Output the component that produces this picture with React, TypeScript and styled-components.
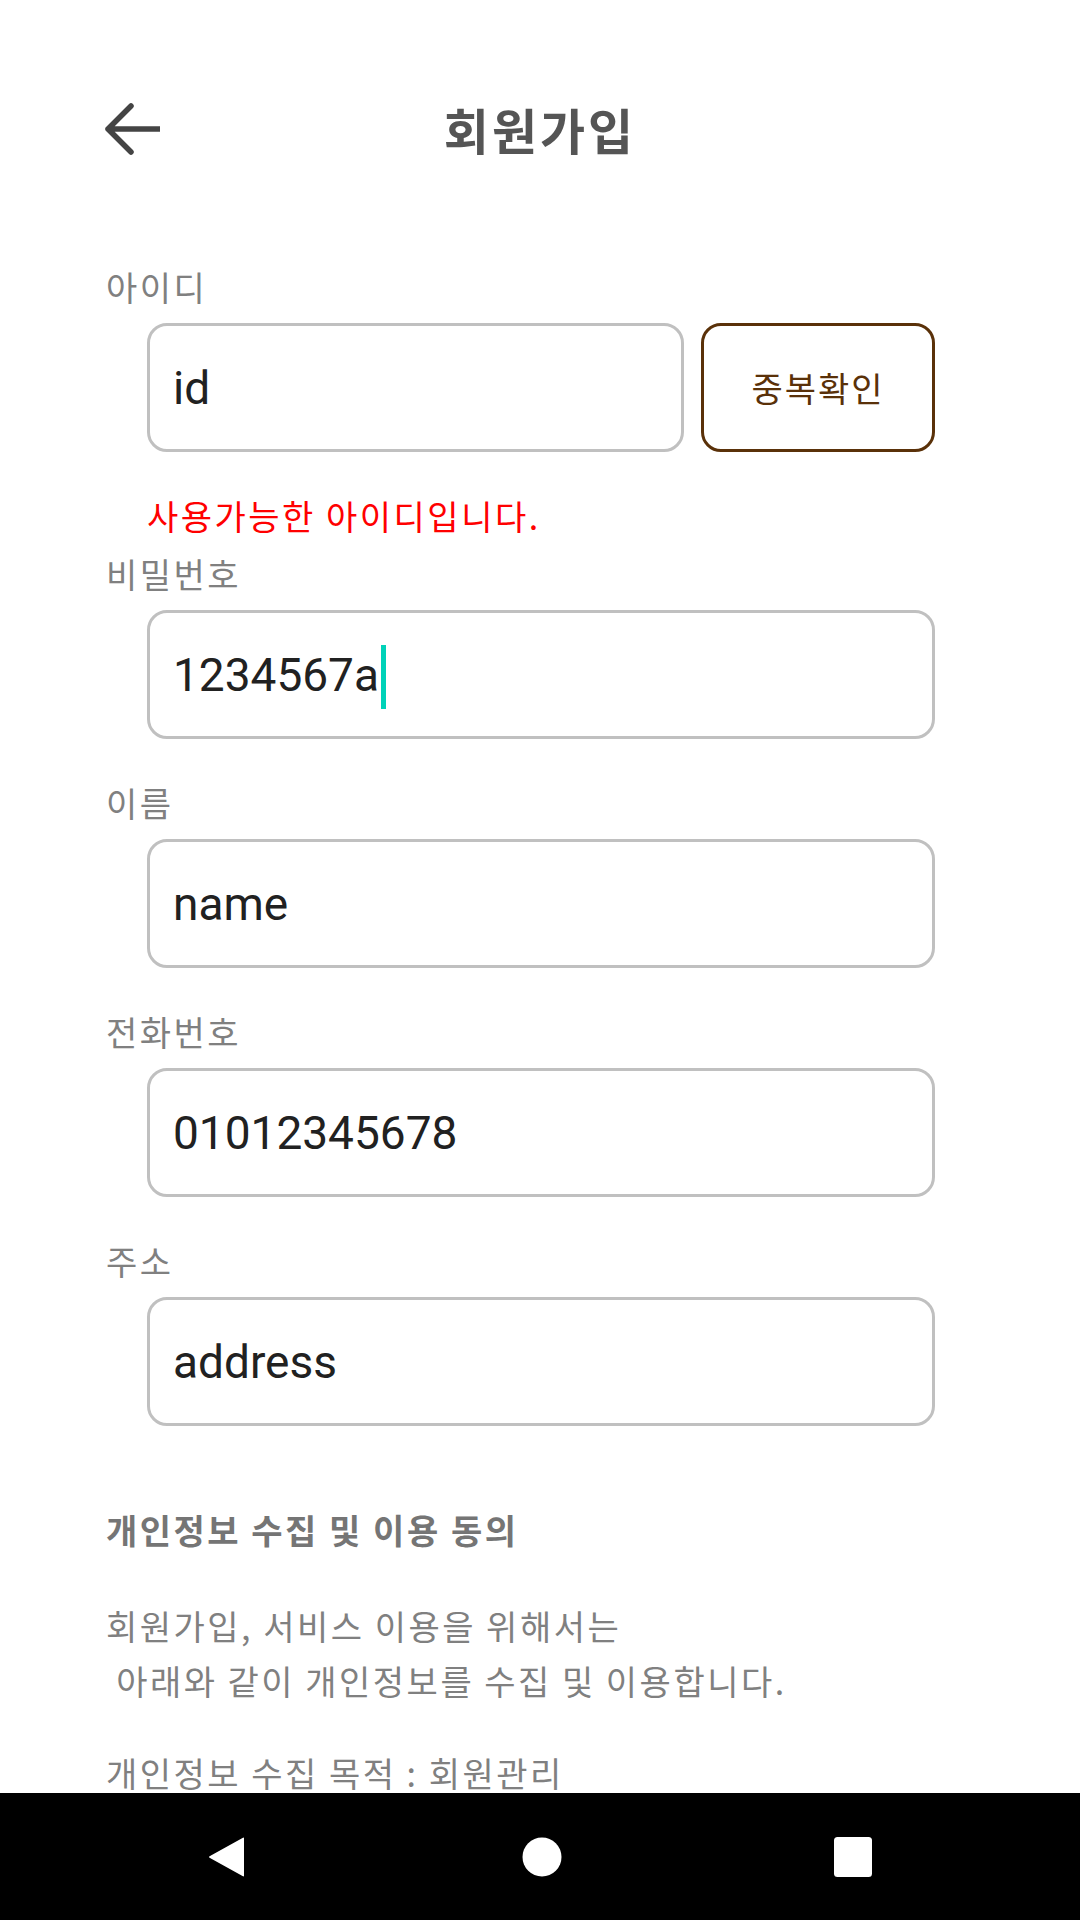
import styled, { createGlobalStyle } from "styled-components";

const GlobalStyle = createGlobalStyle`
  html, body {
    margin: 0;
    padding: 0;
    background: #fff;
  }
  body {
    font-family: Roboto, "Noto Sans CJK KR", sans-serif;
  }
`;

interface FieldProps {
  label: string;
  value: string;
  caret?: boolean;
}

function Field({ label, value, caret }: FieldProps) {
  return (
    <FieldContainer>
      <Label>{label}</Label>
      <InputBox>
        <InputText>{value}</InputText>
        {caret && <Caret />}
      </InputBox>
    </FieldContainer>
  );
}

function App() {
  return (
    <>
      <GlobalStyle />
      <Page>
        <Content>
          <Header>
            <BackButton>
              <svg width="60" height="60" viewBox="0 0 60 60" fill="none">
                <path
                  d="M8 30 H60 M31 7 L8 30 L31 53"
                  stroke="#444"
                  strokeWidth="5.5"
                  strokeLinecap="round"
                  strokeLinejoin="round"
                />
              </svg>
            </BackButton>
            <Title>회원가입</Title>
          </Header>

          <Form>
            <FieldContainer $tight>
              <Label>아이디</Label>
              <InputRow>
                <InputBox>
                  <InputText>id</InputText>
                </InputBox>
                <CheckButton>중복확인</CheckButton>
              </InputRow>
              <Message>사용가능한 아이디입니다.</Message>
            </FieldContainer>
            <Field label="비밀번호" value="1234567a" caret />
            <Field label="이름" value="name" />
            <Field label="전화번호" value="01012345678" />
            <Field label="주소" value="address" />
          </Form>

          <Agreement>
            <AgreementTitle>개인정보 수집 및 이용 동의</AgreementTitle>
            <AgreementText>
              {"회원가입, 서비스 이용을 위해서는\n 아래와 같이 개인정보를 수집 및 이용합니다."}
            </AgreementText>
            <AgreementText>개인정보 수집 목적 : 회원관리</AgreementText>
          </Agreement>
        </Content>

        <NavBar>
          <NavIcon width="40" height="42" viewBox="0 0 40 42">
            <path d="M37 2.5 L37 39.5 Q37 41 35.5 40 L3 22 Q1 21 3 20 L35.5 2 Q37 1 37 2.5 Z" fill="#fff" />
          </NavIcon>
          <NavIcon width="40" height="40" viewBox="0 0 40 40">
            <circle cx="20" cy="20" r="19.5" fill="#fff" />
          </NavIcon>
          <NavIcon width="40" height="40" viewBox="0 0 40 40" $shift={-4}>
            <rect x="1" y="0" width="38" height="40" rx="3.5" fill="#fff" />
          </NavIcon>
        </NavBar>
      </Page>
    </>
  );
}

export default App;

const Page = styled.div`
  display: flex;
  flex-direction: column;
  width: 1080px;
  height: 1920px;
  overflow: hidden;
  background: #fff;
`;

const Content = styled.div`
  flex: 1;
  overflow: hidden;
  padding: 99px 145px 0 106px;
`;

const Header = styled.div`
  position: relative;
  display: flex;
  align-items: center;
  justify-content: center;
  height: 60px;
  margin: 0 -145px 0 -106px;
`;

const BackButton = styled.div`
  position: absolute;
  left: 100px;
  top: 0;
  width: 60px;
  height: 60px;
  display: flex;
`;

const Title = styled.h1`
  margin: 0;
  font-family: "Noto Sans CJK KR", sans-serif;
  font-size: 49px;
  font-weight: 700;
  letter-spacing: 3px;
  line-height: 60px;
  color: #555555;
`;

const Form = styled.div`
  display: flex;
  flex-direction: column;
  margin-top: 108px;
`;

const FieldContainer = styled.div<{ $tight?: boolean }>`
  display: flex;
  flex-direction: column;
  margin-bottom: ${(p) => (p.$tight ? 18 : 44)}px;
`;

const Label = styled.p`
  margin: 0 0 16px;
  font-family: "Noto Sans CJK KR", sans-serif;
  font-size: 34px;
  letter-spacing: 2.5px;
  line-height: 40px;
  color: #808080;
`;

const InputRow = styled.div`
  display: flex;
  column-gap: 17px;
  margin-left: 41px;

  & > div {
    margin-left: 0;
    flex: 1;
  }
`;

const InputBox = styled.div`
  box-sizing: border-box;
  display: flex;
  align-items: center;
  height: 129px;
  margin-left: 41px;
  padding: 0 23px;
  border: 3px solid #c0c0c0;
  border-radius: 20px;
  background: #fff;
`;

const InputText = styled.span`
  font-family: Roboto, "Noto Sans CJK KR", sans-serif;
  font-size: 46px;
  color: #212121;
`;

const Caret = styled.span`
  display: inline-block;
  width: 5px;
  height: 64px;
  margin-left: 2px;
  margin-top: 4px;
  background: #00d2b8;
`;

const CheckButton = styled.button`
  box-sizing: border-box;
  width: 234px;
  height: 129px;
  border: 3px solid #5a3109;
  border-radius: 20px;
  background: #fff;
  font-family: "Noto Sans CJK KR", sans-serif;
  font-size: 34px;
  letter-spacing: 2px;
  color: #5a3109;
  padding: 0;
`;

const Message = styled.p`
  margin: 44px 0 0 41px;
  font-family: "Noto Sans CJK KR", sans-serif;
  font-size: 34px;
  letter-spacing: 2.5px;
  line-height: 40px;
  color: #ff0000;
`;

const Agreement = styled.div`
  display: flex;
  flex-direction: column;
  margin-top: 40px;
`;

const AgreementTitle = styled.h2`
  margin: 0 0 48px;
  font-family: "Noto Sans CJK KR", sans-serif;
  font-size: 34px;
  font-weight: 700;
  letter-spacing: 2.5px;
  line-height: 40px;
  color: #757575;
`;

const AgreementText = styled.p`
  margin: 0 0 37px;
  white-space: pre-wrap;
  font-family: "Noto Sans CJK KR", sans-serif;
  font-size: 34px;
  letter-spacing: 2.5px;
  line-height: 55px;
  color: #808080;
`;

const NavBar = styled.div`
  flex: 0 0 127px;
  display: flex;
  align-items: center;
  justify-content: center;
  column-gap: 275px;
  background: #000;
`;

const NavIcon = styled.svg<{ $shift?: number }>`
  margin-left: ${(p) => p.$shift ?? 0}px;
`;
